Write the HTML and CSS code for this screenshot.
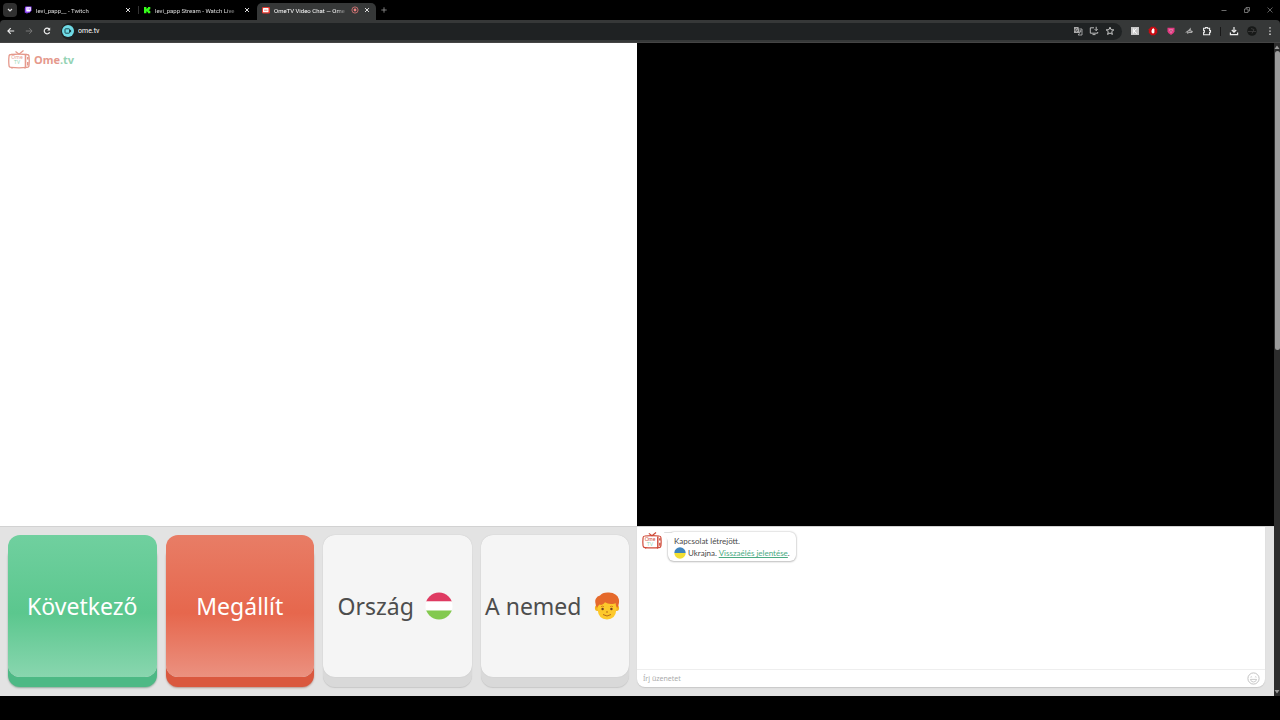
FILE: index.html
```html
<!DOCTYPE html>
<html lang="hu">
<head>
<meta charset="utf-8">
<title>OmeTV Video Chat</title>
<link rel="stylesheet" href="styles.css">
</head>
<body>
<svg width="0" height="0" class="defs" aria-hidden="true">
  <symbol id="tv" viewBox="0 0 22 19">
    <path d="M7.500 1.500 11 4.200 15.500.6" fill="none" stroke="currentColor" stroke-width="1.300"/>
    <path d="M3 4.500Q11 3.600 19 4.500 21 4.600 21 6.500 21.500 11 21 15.500 21 17.300 19 17.400 11 18.200 3 17.400 1 17.300 1 15.500 .5 11 1 6.500 1 4.600 3 4.500Z" fill="none" stroke="currentColor" stroke-width="1.300"/>
    <path d="M17.500 5v12.500M19.800 7v2.500M19.800 12v3.500" fill="none" stroke="currentColor" stroke-width="1.600"/>
    <path d="M4 17.500v1.300M17 17.500v1.300" stroke="currentColor"/>
  </symbol>
  <symbol id="close" viewBox="0 0 8 8"><path d="m2 2 4 4M6 2 2 6" stroke="currentColor" fill="none"/></symbol>
</svg>

<header class="browser">
  <div class="tabs">
    <button class="tab-search" aria-label="Search tabs"><svg viewBox="0 0 14 14"><path d="m5 6 2 2 2-2" fill="none" stroke="#ddd" stroke-width="1.200"/></svg></button>
    <div class="tab">
      <svg class="favicon" viewBox="0 0 8 8"><path d="M1.500.5h6v4.200l-2 2H4L2.600 8V6.700H.8V2z" fill="#9146ff"/><path d="M2.300 1.200h4.500v3.200L5.600 5.500H2.300z" fill="#fff"/><path d="M4 2.200v1.600M5.600 2.200v1.600" stroke="#9146ff" stroke-width=".7"/></svg>
      <span class="tab-title">levi_papp__ - Twitch</span>
      <button class="icon-btn" aria-label="Close tab"><svg class="x"><use href="#close"/></svg></button>
    </div>
    <div class="tab divided">
      <svg class="favicon" viewBox="0 0 8 8"><path d="M1 1h2.400v1.800h.8V2H5V1h2.300v2.300h-.8V4h-.7v.3h.7V5h.8v2.300H5v-1h-.8v-.8h-.8v1.800H1z" fill="#35fc1a"/></svg>
      <span class="tab-title">levi_papp Stream - Watch Live</span>
      <button class="icon-btn" aria-label="Close tab"><svg class="x"><use href="#close"/></svg></button>
    </div>
    <div class="tab active">
      <svg class="favicon" viewBox="0 0 8 8"><rect y="1" width="8" height="6.400" rx="1.200" fill="#e5392f"/><rect x="1" y="2" width="5.500" height="4.300" rx=".5" fill="#fff"/><path d="M2 4.200h3.500" stroke="#e68a84"/></svg>
      <span class="tab-title">OmeTV Video Chat — Ome</span>
      <svg class="favicon" viewBox="0 0 8 8"><circle cx="4" cy="4" r="3.100" fill="none" stroke="#e27a7a" stroke-width=".8"/><circle cx="4" cy="4" r="1.400" fill="#f08080"/></svg>
      <button class="icon-btn" aria-label="Close tab"><svg class="x"><use href="#close"/></svg></button>
    </div>
    <button class="icon-btn new-tab" aria-label="New tab"><svg class="x" viewBox="0 0 8 8"><path d="M4 1.300v5.400M1.300 4h5.400" stroke="#999" stroke-width=".8"/></svg></button>
    <div class="window-controls">
      <button class="icon-btn" aria-label="Minimize"><svg class="x" viewBox="0 0 8 8"><path d="M1.500 4.500h5" stroke="#888" stroke-width=".8"/></svg></button>
      <button class="icon-btn" aria-label="Restore"><svg class="x" viewBox="0 0 8 8"><path d="M1.500 3h3.500v3.500H1.500zM3 3V1.500h3.500V5H5" fill="none" stroke="#888" stroke-width=".8"/></svg></button>
      <button class="icon-btn" aria-label="Close"><svg class="x" viewBox="0 0 8 8"><path d="m1.500 1.500 5 5M6.500 1.500l-5 5" stroke="#888" stroke-width=".7"/></svg></button>
    </div>
  </div>
  <div class="toolbar">
    <nav class="history">
      <button class="icon-btn" aria-label="Back"><svg class="tool" viewBox="0 0 10 10"><path d="M8.200 5H2M4.700 2.200 1.900 5l2.800 2.800" fill="none" stroke="#eee" stroke-width="1.100"/></svg></button>
      <button class="icon-btn" aria-label="Forward"><svg class="tool" viewBox="0 0 10 10"><path d="M1.800 5H8M5.300 2.200 8.100 5 5.300 7.800" fill="none" stroke="#777"/></svg></button>
      <button class="icon-btn" aria-label="Reload"><svg class="tool" viewBox="0 0 10 10"><path d="M7.600 6.200A2.800 2.800 0 1 1 7.200 3.200" fill="none" stroke="#eee" stroke-width="1.200"/><path d="M8.200 1.500v3H5.200z" fill="#eee"/></svg></button>
    </nav>
    <div class="omnibox">
      <svg class="site" viewBox="0 0 12 12"><circle cx="6" cy="6" r="6" fill="#6fdbe6"/><rect x="3" y="3.800" width="4.500" height="4.400" rx=".6" fill="none" stroke="#173a42" stroke-width=".9"/><path d="m7.500 5.500 1.600-1v3l-1.600-1z" fill="#173a42"/></svg>
      <input class="url" aria-label="Address" value="ome.tv">
      <button class="icon-btn" aria-label="Translate"><svg class="tool" viewBox="0 0 10 10"><path d="M1 1h4.500l1.200 6H1z" fill="#aaa"/><path d="M6.300 3H9v6H5.200l1.300-1.800M6.500 5h2M7.500 4.500v1L6.500 7" fill="none" stroke="#bbb" stroke-width=".8"/><path d="M4.400 3.200a1.300 1.300 0 1 0 .2 1.200h-1" fill="none" stroke="#222" stroke-width=".6"/></svg></button>
      <button class="icon-btn" aria-label="Install"><svg class="tool" viewBox="0 0 10 10"><path d="M5 1.800H1.300v5.400h7.400V6M3.500 8.600h3M7.200.8v3.600M5.700 3.200l1.500 1.500 1.500-1.500" fill="none" stroke="#ccc" stroke-width=".9"/></svg></button>
      <button class="icon-btn" aria-label="Bookmark"><svg class="tool" viewBox="0 0 10 10"><path d="m5 1.200 1.100 2.500 2.700.2-2.100 1.800.7 2.700L5 7 2.600 8.400l.7-2.700-2.100-1.800 2.700-.2z" fill="none" stroke="#ddd" stroke-width=".9"/></svg></button>
    </div>
    <div class="extensions">
      <button class="icon-btn" aria-label="Extension K"><svg class="tool" viewBox="0 0 10 10"><path d="M1 1h8v8H1z" fill="#c8c8c8"/><path d="M3.700 2.500v5M6.600 2.700 4 5l2.800 2.500" fill="none" stroke="#fff"/></svg></button>
      <button class="icon-btn" aria-label="Blocker"><svg class="tool" viewBox="0 0 10 10"><path d="M3.200.8h3.600l2.400 2.400v3.600L6.800 9.200H3.200L.8 6.800V3.200z" fill="#c90b12"/><path d="M3.500 4V6.300Q5 8.600 6.400 6.500V3H5.600V2h-.8v1H4v1.500z" fill="#fff"/></svg></button>
      <button class="icon-btn" aria-label="Shield"><svg class="tool" viewBox="0 0 10 10"><path d="M1.500 1.800h7v3.500Q8.300 7.500 5 9 1.700 7.500 1.500 5.300z" fill="#e33b83"/><path d="M3 3.500h4L5 7.200z" fill="#f5a1c2"/><path d="M4.300 4.300h1.400v1.200H4.300z" fill="#8f1e50"/></svg></button>
      <button class="icon-btn" aria-label="Cloud extension"><svg class="tool" viewBox="0 0 10 10"><path d="M1 6.500 4.500 4 6.700 1.600l.2 2.700L9 5.200 8 7H5L3.200 8V6.600z" fill="#aaa"/><path d="m4 5.800 3-.7" stroke="#333" stroke-width=".6"/></svg></button>
      <button class="icon-btn" aria-label="Extensions"><svg class="tool" viewBox="0 0 10 10"><path d="M1.600 2.300h2V1.500h1.800v.8h2.200v2.200h.9v1.800h-.9v2.400h-6V6.300h.8V4.500h-.8z" fill="none" stroke="#eee" stroke-width="1.100"/></svg></button>
      <span class="rule"></span>
      <button class="icon-btn" aria-label="Downloads"><svg class="tool" viewBox="0 0 10 10"><path d="M5 1v5M2.800 4 5 6.200 7.200 4M1.400 6.500v2.200h7.200V6.500" fill="none" stroke="#eee" stroke-width="1.200"/></svg></button>
      <button class="icon-btn" aria-label="Profile"><svg class="tool" viewBox="0 0 10 10"><circle cx="5" cy="5" r="4.800" fill="#171918"/><path d="M1 5.500h8M4 2.500l3 1-2 4" stroke="#454545" fill="none" stroke-width=".7"/></svg></button>
      <button class="icon-btn" aria-label="Menu"><svg class="tool" viewBox="0 0 10 10"><path d="M5 1.200v1.300M5 4.400v1.300M5 7.600v1.300" stroke="#eee" stroke-width="1.300"/></svg></button>
    </div>
  </div>
</header>

<div class="viewport">
  <main class="app">
    <section class="videos">
      <div class="video remote">
        <a class="logo" href="#">
          <span class="logo-tv"><svg><use href="#tv"/></svg><span class="tv-text">Ome<span class="green">TV</span></span></span>
          <span class="logo-name">Ome<span class="green">.tv</span></span>
        </a>
      </div>
      <div class="video local"></div>
    </section>
    <section class="panel">
      <div class="buttons">
        <button class="key next"><span>Következő</span></button>
        <button class="key stop"><span>Megállít</span></button>
        <button class="key plain"><span>Ország</span>
          <svg viewBox="0 0 28 28"><clipPath id="disc"><circle cx="14" cy="14" r="13.500"/></clipPath><g clip-path="url(#disc)"><path d="M0 0h28v9.500H0z" fill="#df3b62"/><path d="M0 9.500h28v9H0z" fill="#fff"/><path d="M0 18.500h28V28H0z" fill="#83c94f"/></g></svg>
        </button>
        <button class="key plain"><span>A nemed</span>
          <svg viewBox="0 0 28 28"><ellipse cx="4.300" cy="16" rx="2.400" ry="3" fill="#f5b51f"/><ellipse cx="23.700" cy="16" rx="2.400" ry="3" fill="#f5b51f"/><path d="M4.500 9h19v8q-1 10.500-9.500 10.500T4.500 17z" fill="#fdc92c"/><path d="M3.900 16Q1 9 3 6.500 4.200 4 7 3.500 9.500 0 16 .5q8 .5 9.800 6.500 1 4-1.500 9-1.600-1.500-1.800-5-1 1.300-4.500 1-3.500-.3-6-1.800Q9.500 14 6.500 12.500 5 13.500 3.900 16z" fill="#e5692b"/><circle cx="9.600" cy="17" r="1.200" fill="#704023"/><circle cx="18.400" cy="17" r="1.200" fill="#704023"/><path d="M8 14.700q1.600-1 3 0M17 14.700q1.500-1 3 0" stroke="#d87a1a" stroke-width=".9" fill="none"/><path d="M13 19.800q1 .8 2 0M10 22.500q4 3 8 0" stroke="#b86b18" fill="none"/></svg>
        </button>
      </div>
      <div class="chat">
        <div class="messages">
          <span class="logo-tv avatar"><svg><use href="#tv"/></svg><span class="tv-text">Ome<span class="green">TV</span></span></span>
          <div class="bubble">
            <p>Kapcsolat létrejött.</p>
            <p><svg class="flag" viewBox="0 0 12 12"><path d="M.3 6a5.700 5.700 0 0 1 11.400 0z" fill="#3e84bd"/><path d="M.3 6a5.700 5.700 0 0 0 11.400 0z" fill="#f2df32"/></svg><span>Ukrajna. <a href="#">Visszaélés jelentése</a>.</span></p>
          </div>
        </div>
        <form class="composer">
          <input class="message" placeholder="Írj üzenetet" aria-label="Írj üzenetet">
          <button type="button" class="icon-btn" aria-label="Emoji"><svg class="smile" viewBox="0 0 13 13"><circle cx="6.500" cy="6.500" r="5.600" fill="none" stroke="#bbb" stroke-width=".9"/><path d="M3.500 5.200q.8-.8 1.600 0M7.900 5.200q.8-.8 1.600 0M3.400 7.400h6.200q-.6 2.600-3.100 2.600T3.400 7.400z" fill="none" stroke="#b5b5b5" stroke-width=".7"/></svg></button>
        </form>
      </div>
    </section>
  </main>
  <div class="scrollbar" aria-hidden="true">
    <svg viewBox="0 0 6 8"><path d="M3 2.500 5.500 6h-5z" fill="#999"/></svg>
    <div class="track"><div class="thumb"></div></div>
    <svg viewBox="0 0 6 8"><path d="M3 5.500.5 2h5z" fill="#999"/></svg>
  </div>
</div>
</body>
</html>
```
FILE: styles.css
```css
* { box-sizing: border-box; }
body {
  margin: 0;
  height: 100vh;
  padding-bottom: 24px;
  display: flex;
  flex-direction: column;
  background: #000;
  color: #4a4a4a;
  font-family: "Noto Sans", "Open Sans", sans-serif;
}
.defs { position: absolute; }
button, input { font: inherit; border: 0; padding: 0; background: none; }
p { margin: 0; }
svg { display: block; flex: none; }
.icon-btn { display: grid; place-items: center; color: #ddd; }
.x, .favicon { width: 8px; height: 8px; }
.tool { width: 10px; height: 10px; }

.browser { flex: none; font-family: Roboto, sans-serif; font-size: 6px; color: #ddd; }
.tabs { display: flex; align-items: center; height: 20px; padding-left: 3px; }
.tab-search { width: 14px; height: 14px; margin-right: 2px; border-radius: 4px; background: #303030; }
.tab {
  display: flex;
  align-items: center;
  gap: 4px;
  flex: 0 1 119px;
  min-width: 0;
  height: 17px;
  padding: 0 6px 0 5px;
}
.tab.divided { border-left: 1px solid #333; height: 8px; padding-left: 4px; }
.tab.active {
  align-self: flex-end;
  padding: 0 5px 3px;
  border-radius: 5px 5px 0 0;
  background: #363838;
  color: #fff;
}
.tab-title {
  flex: 1;
  overflow: hidden;
  white-space: nowrap;
  mask-image: linear-gradient(to right, #000 85%, transparent);
}
.new-tab { margin-left: 4px; }
.window-controls { display: flex; gap: 15px; margin-left: auto; padding-right: 6px; }

.toolbar {
  display: flex;
  align-items: center;
  height: 23px;
  border-bottom: 1px solid #444;
  border-radius: 4px 4px 0 0;
  background: #363838;
}
.history { display: flex; gap: 8px; padding: 0 9px 0 6px; }
.omnibox {
  display: flex;
  align-items: center;
  gap: 6px;
  flex: 1;
  height: 17px;
  padding: 0 7px 0 1px;
  border-radius: 9px;
  background: #1f2223;
}
.site { width: 12px; height: 12px; }
.url { flex: 1; min-width: 0; margin-left: -2px; color: #fff; font-size: 7px; }
.extensions { display: flex; align-items: center; gap: 8px; padding: 0 5px 0 8px; }
.rule { width: 1px; height: 9px; background: #181818; }

.viewport { display: flex; flex: 1; min-height: 0; }
.app { display: flex; flex-direction: column; flex: 1; min-width: 0; background: #e3e3e3; }
.videos { display: grid; grid-template-columns: 1fr 1fr; flex: 1; }
.remote { background: #fff; }
.local { background: #000; }
.logo { display: inline-flex; align-items: center; gap: 4px; margin: 6px 8px; color: #e5998c; text-decoration: none; }
.logo-tv { display: grid; flex: none; width: 22px; height: 19px; color: #e5998c; }
.logo-tv > * { grid-area: 1 / 1; }
.logo-tv svg { width: 100%; height: 100%; }
.tv-text { display: flex; flex-direction: column; align-items: center; padding: 5px 4px 0 0; font-size: 5px; line-height: 5px; }
.logo-name { padding-top: 2px; font-size: 11px; line-height: 18px; font-weight: 700; }
.green { color: #94d3b4; }

.panel { display: grid; grid-template-columns: 1fr 1fr; height: 170px; border-top: 1px solid #d2d2d2; }
.buttons { display: grid; grid-template-columns: repeat(4, 1fr); gap: 9px; padding: 8px 8px 9px; }
.key {
  display: flex;
  align-items: center;
  justify-content: center;
  gap: 11px;
  margin-bottom: 10px;
  border-radius: 12px;
  font-size: 23px;
  line-height: 32px;
  white-space: nowrap;
}
.key svg { width: 28px; height: 28px; }
.next {
  color: #fff;
  background: linear-gradient(#70d09f, #5bc78e 55%, #89d6af);
  box-shadow: 0 10px #4db985, 0 11px 2px #8fa89b;
}
.stop {
  color: #fff;
  background: linear-gradient(#e87d66, #e6674d 55%, #eb9180);
  box-shadow: 0 10px #da583f, 0 11px 2px #b69891;
}
.plain { padding-right: 4px; color: #4d4d4d; background: #f5f5f5; box-shadow: 0 0 1px #bbb, 0 10px #d9d9d9, 0 11px 1px #c8c8c8; }

.chat {
  display: flex;
  flex-direction: column;
  min-width: 0;
  margin: 0 9px 9px 0;
  border-radius: 0 0 8px 8px;
  background: #fff;
  box-shadow: 0 1px 1px #c8c8c8;
}
.messages { display: flex; align-items: flex-start; gap: 6px; flex: 1; padding: 5px; font-family: Lato, sans-serif; font-size: 8px; line-height: 12px; }
.avatar { width: 20px; height: 17px; color: #cf4937; }
.bubble { position: relative; padding: 3px 6px 2px; border-radius: 6px; background: #fff; box-shadow: 0 0 2px #aaa, 0 1px 2px #ccc; }
.bubble::before {
  content: "";
  position: absolute;
  left: -4px;
  top: 0;
  width: 8px;
  height: 8px;
  background: #fff;
  border-top: 1px solid #ddd;
  clip-path: polygon(0 0, 100% 0, 100% 100%, 50% 100%);
}
.bubble p { display: flex; align-items: center; gap: 2px; white-space: nowrap; }
.flag { width: 12px; height: 12px; }
.bubble a { color: #4bab83; }
.composer { display: flex; align-items: center; height: 18px; padding: 0 5px 0 6px; border-top: 1px solid #eee; }
.message { flex: 1; min-width: 0; font-size: 7px; color: #444; }
.message::placeholder { color: #aaa; opacity: 1; }
.smile { width: 13px; height: 13px; }

.scrollbar { display: flex; flex-direction: column; width: 6px; background: #2c2c2c; }
.scrollbar svg { width: 6px; height: 8px; }
.track { flex: 1; padding-left: 1px; }
.thumb { height: 47%; border-radius: 3px; background: #9b9b9b; }
```
